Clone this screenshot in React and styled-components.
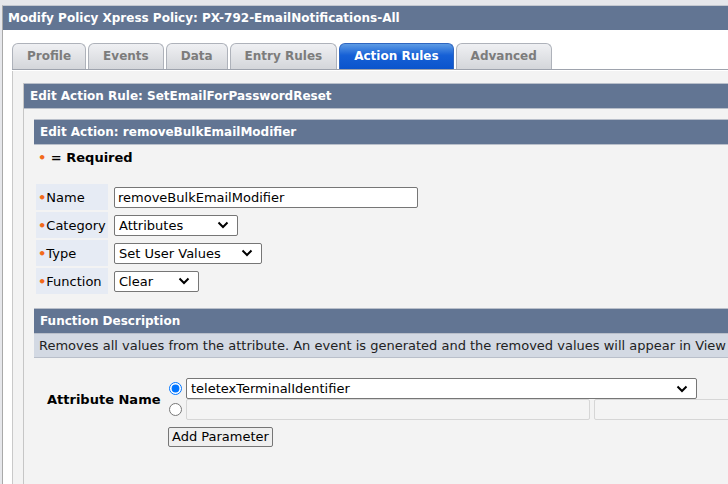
import styled, { createGlobalStyle } from 'styled-components';

const GlobalStyle = createGlobalStyle`
    html, body, #root {
        margin: 0;
        height: 100%;
        overflow: hidden;
    }
    body {
        background: #e6e7eb;
        font-family: "DejaVu Sans", Verdana, sans-serif;
        color: #000;
    }
`;

const tabs = ['Profile', 'Events', 'Data', 'Entry Rules', 'Action Rules', 'Advanced'];

const Page = styled.div`
    padding: 5px 0 0 2px;
    height: 100%;
    box-sizing: border-box;
`;

const Window = styled.div`
    width: 980px;
    height: 100%;
    box-sizing: border-box;
    background: #fff;
    border-left: 1px solid #a9a9a9;
    border-top: 1px solid #c4c8d0;
    display: flex;
    flex-direction: column;
`;

const TitleBar = styled.div`
    height: 24px;
    line-height: 24px;
    background: #627593;
    color: #fff;
    font-weight: bold;
    font-size: 12px;
    padding-left: 5px;
    white-space: nowrap;
`;

const Body = styled.div`
    flex: 1;
    padding: 13px 0 0 9px;
    display: flex;
    flex-direction: column;
`;

const TabRow = styled.div`
    display: flex;
    gap: 2px;
    height: 26px;
    border-bottom: 1px solid #9ea3ad;
`;

const Tab = styled.div`
    box-sizing: border-box;
    height: 26px;
    padding: 0 14px;
    line-height: 25px;
    font-size: 12px;
    font-weight: bold;
    border: 1px solid ${p => (p.$active ? '#2f66c0' : '#aeb2ba')};
    border-bottom: none;
    border-radius: 6px 6px 0 0;
    color: ${p => (p.$active ? '#fff' : '#7c7c7c')};
    background: ${p =>
        p.$active
            ? 'linear-gradient(#5d9be4, #1660d6 45%, #0b54cc)'
            : 'linear-gradient(#eff0f3, #d4d6da)'};
    white-space: nowrap;
`;

const Panel = styled.div`
    flex: 1;
    margin-top: 1px;
    background: #f3f3f3;
    border-left: 1px solid #c9c9c9;
    padding: 12px 0 0 10px;
    display: flex;
    flex-direction: column;
`;

const Section = styled.div`
    flex: 1;
    border-left: 1px solid #c6c6c6;
    display: flex;
    flex-direction: column;
`;

const Header = styled.div`
    height: 24px;
    line-height: 24px;
    background: #627593;
    border-top: 1px solid #b9bfca;
    border-bottom: 1px solid #b9bfca;
    color: #fff;
    font-weight: bold;
    font-size: 12px;
    padding-left: 6px;
    white-space: nowrap;
`;

const Inner = styled.div`
    flex: 1;
    padding: 10px 0 0 10px;
    display: flex;
    flex-direction: column;
`;

const Required = styled.div`
    margin: 5px 0 0 4px;
    font-size: 13px;
    font-weight: bold;
    line-height: 16px;
`;

const Dot = styled.span`
    color: #f26a1b;
    font-weight: bold;
`;

const Form = styled.div`
    margin: 18px 0 0 2px;
    display: grid;
    grid-template-columns: 72px auto;
    row-gap: 2px;
    column-gap: 6px;
    justify-items: start;
    align-items: center;
`;

const Label = styled.div`
    height: 26px;
    line-height: 27px;
    width: 100%;
    box-sizing: border-box;
    padding-left: 2px;
    background: #e6ebf4;
    font-size: 13px;
    white-space: nowrap;
`;

const TextInput = styled.input`
    box-sizing: border-box;
    width: ${p => p.$w}px;
    height: 21px;
    padding: 0 3px;
    border: 1px solid #767676;
    border-radius: 2px;
    background: #fff;
    font-family: "DejaVu Sans", Verdana, sans-serif;
    font-size: 13px;
    color: #000;
    &:disabled {
        background: #f4f4f4;
        border-color: #d6d6d6;
    }
`;

const Select = styled.div`
    box-sizing: border-box;
    width: ${p => p.$w}px;
    height: 21px;
    padding: 0 8px 0 4px;
    border: 1px solid #767676;
    border-radius: 2px;
    background: #fff;
    font-size: 13px;
    display: flex;
    align-items: center;
    justify-content: space-between;
    white-space: nowrap;
`;

const Chevron = () => (
    <svg width="12" height="8" viewBox="0 0 12 8">
        <path d="M1.5 1.5 L6 6 L10.5 1.5" fill="none" stroke="#000" strokeWidth="2" />
    </svg>
);

const DescHeader = styled(Header)`
    margin-top: 14px;
`;

const Desc = styled.div`
    height: 23px;
    line-height: 23px;
    background: #d3d9e3;
    border-bottom: 1px solid #b9bfca;
    padding-left: 5px;
    font-size: 13px;
    color: #222;
    white-space: nowrap;
`;

const Params = styled.div`
    margin-top: 20px;
    display: grid;
    grid-template-columns: 134px 18px auto;
    align-items: center;
`;

const AttrLabel = styled.div`
    grid-row: 1 / span 2;
    padding-left: 13px;
    font-size: 13px;
    font-weight: bold;
`;

const Radio = styled.input`
    margin: 0 0 0 1px;
    width: 13px;
    height: 13px;
    accent-color: #0075ff;
`;

const InputPair = styled.div`
    display: flex;
    gap: 4px;
`;

const ButtonRow = styled.div`
    grid-column: 2 / span 2;
    padding-top: 6px;
`;

const Button = styled.button`
    height: 20px;
    padding: 0 3px;
    font-family: "DejaVu Sans", Verdana, sans-serif;
    font-size: 13px;
    background: #efefef;
    border: 1px solid #767676;
    border-radius: 2px;
    color: #000;
`;

const rows = [
    { label: 'Name', input: true, value: 'removeBulkEmailModifier', w: 304 },
    { label: 'Category', value: 'Attributes', w: 124 },
    { label: 'Type', value: 'Set User Values', w: 148 },
    { label: 'Function', value: 'Clear', w: 85 },
];

export default function App() {
    return (
        <Page>
            <GlobalStyle />
            <Window>
                <TitleBar>Modify Policy Xpress Policy: PX-792-EmailNotifications-All</TitleBar>
                <Body>
                    <TabRow>
                        {tabs.map(t => (
                            <Tab key={t} $active={t === 'Action Rules'}>{t}</Tab>
                        ))}
                    </TabRow>
                    <Panel>
                        <Section>
                            <Header>Edit Action Rule: SetEmailForPasswordReset</Header>
                            <Inner>
                                <Header>Edit Action: removeBulkEmailModifier</Header>
                                <Required><Dot>•</Dot> = Required</Required>
                                <Form>
                                    {rows.map(r => [
                                        <Label key={r.label + '-l'}><Dot>•</Dot>{r.label}</Label>,
                                        r.input ? (
                                            <TextInput key={r.label} $w={r.w} defaultValue={r.value} />
                                        ) : (
                                            <Select key={r.label} $w={r.w}>{r.value}<Chevron /></Select>
                                        ),
                                    ])}
                                </Form>
                                <DescHeader>Function Description</DescHeader>
                                <Desc>Removes all values from the attribute. An event is generated and the removed values will appear in View</Desc>
                                <Params>
                                    <AttrLabel>Attribute Name</AttrLabel>
                                    <Radio type="radio" name="p" defaultChecked />
                                    <Select $w={511}>teletexTerminalIdentifier<Chevron /></Select>
                                    <Radio type="radio" name="p" />
                                    <InputPair>
                                        <TextInput $w={404} disabled />
                                        <TextInput $w={200} disabled />
                                    </InputPair>
                                    <ButtonRow>
                                        <Button>Add Parameter</Button>
                                    </ButtonRow>
                                </Params>
                            </Inner>
                        </Section>
                    </Panel>
                </Body>
            </Window>
        </Page>
    );
}
